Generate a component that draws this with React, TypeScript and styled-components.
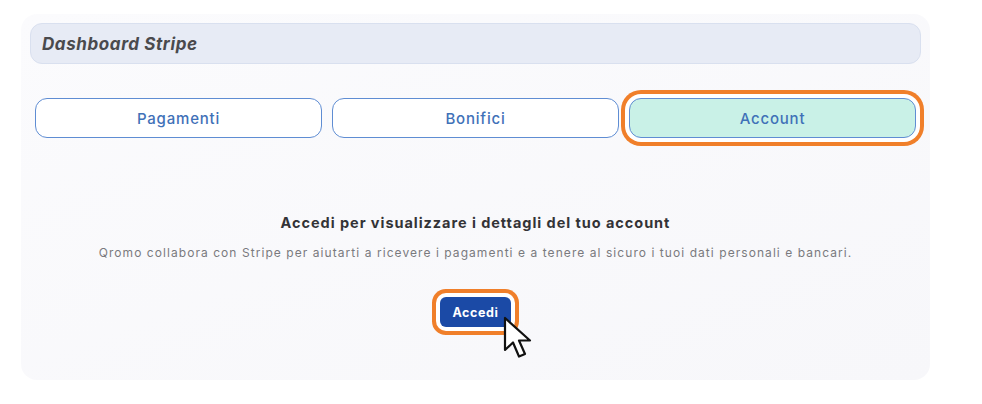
import React, { useState } from 'react'
import styled, { createGlobalStyle } from 'styled-components'

const GlobalStyle = createGlobalStyle`
  html, body {
    margin: 0;
    padding: 0;
    background: #ffffff;
  }
  body {
    font-family: "Inter", "Noto Sans", sans-serif;
  }
`;

const Page = styled.div`
  width: 982px;
  height: 404px;
  padding: 14px 0 0 21px;
  box-sizing: border-box;
`;

const Card = styled.div`
  width: 909px;
  height: 366px;
  box-sizing: border-box;
  padding: 9px 9px 0 9px;
  border-radius: 16px;
  background: linear-gradient(160deg, #fbfbfd 0%, #f7f7fa 100%);
  display: flex;
  flex-direction: column;
`;

const Header = styled.div`
  height: 41px;
  box-sizing: border-box;
  border: 1px solid #d9e0ef;
  border-radius: 12px;
  background: #e7ebf5;
  display: flex;
  align-items: center;
  padding-left: 11px;
`;

const HeaderTitle = styled.h1`
  margin: 0;
  font-size: 17px;
  font-weight: 700;
  font-style: italic;
  letter-spacing: 0.6px;
  color: #4a4a4d;
`;

const Tabs = styled.div`
  display: grid;
  grid-template-columns: repeat(3, 1fr);
  gap: 10px;
  margin: 34px 5px 0 5px;
`;

const Tab = styled.button<{ $active?: boolean }>`
  height: 40px;
  border: 1.5px solid #5f8dd3;
  border-radius: 12px;
  background: ${p => (p.$active ? '#c9f1e7' : '#ffffff')};
  color: #3f71b8;
  font-family: "Inter", "Noto Sans", sans-serif;
  font-size: 15px;
  font-weight: 500;
  letter-spacing: 0.8px;
  cursor: pointer;
  box-shadow: ${p => (p.$active ? '0 0 0 4px #ffffff, 0 0 0 8px #f07f2a' : 'none')};
`;

const Body = styled.div`
  display: flex;
  flex-direction: column;
  align-items: center;
  margin-top: 76px;
`;

const Heading = styled.h2`
  margin: 0;
  font-size: 14.5px;
  font-weight: 700;
  letter-spacing: 0.95px;
  color: #333336;
`;

const Sub = styled.p`
  margin: 14px 0 0 0;
  font-size: 12px;
  letter-spacing: 1.06px;
  color: #7a7a7e;
`;

const ButtonWrap = styled.div`
  position: relative;
  margin-top: 37px;
`;

const LoginButton = styled.button`
  width: 71px;
  height: 30px;
  border: none;
  border-radius: 6px;
  background: #1b4aa6;
  color: #ffffff;
  font-family: "Inter", "Noto Sans", sans-serif;
  font-size: 12.5px;
  font-weight: 700;
  letter-spacing: 0.6px;
  box-shadow: 0 0 0 4px #ffffff, 0 0 0 8px #f07f2a;
  cursor: pointer;
`;

const Pointer = styled.svg`
  position: absolute;
  left: 63px;
  top: 19px;
  pointer-events: none;
`;

const tabs = ['Pagamenti', 'Bonifici', 'Account'];

const App = () => {
  const [active, setActive] = useState('Account');

  return (
    <>
      <GlobalStyle />
      <Page>
        <Card>
          <Header>
            <HeaderTitle>Dashboard Stripe</HeaderTitle>
          </Header>
          <Tabs>
            {tabs.map(t => (
              <Tab key={t} $active={t === active} onClick={() => setActive(t)}>
                {t}
              </Tab>
            ))}
          </Tabs>
          <Body>
            <Heading>Accedi per visualizzare i dettagli del tuo account</Heading>
            <Sub>
              Qromo collabora con Stripe per aiutarti a ricevere i pagamenti e a tenere al sicuro i tuoi dati personali e bancari.
            </Sub>
            <ButtonWrap>
              <LoginButton>Accedi</LoginButton>
              <Pointer width="34" height="46" viewBox="0 0 34 46">
                <path
                  d="M2 2 L2 34 L10 26.5 L16 40.5 L22 38 L16 24.5 L27 24.5 Z"
                  fill="#ffffff"
                  stroke="#111111"
                  strokeWidth="2.2"
                  strokeLinejoin="round"
                />
              </Pointer>
            </ButtonWrap>
          </Body>
        </Card>
      </Page>
    </>
  );
};

export default App;
